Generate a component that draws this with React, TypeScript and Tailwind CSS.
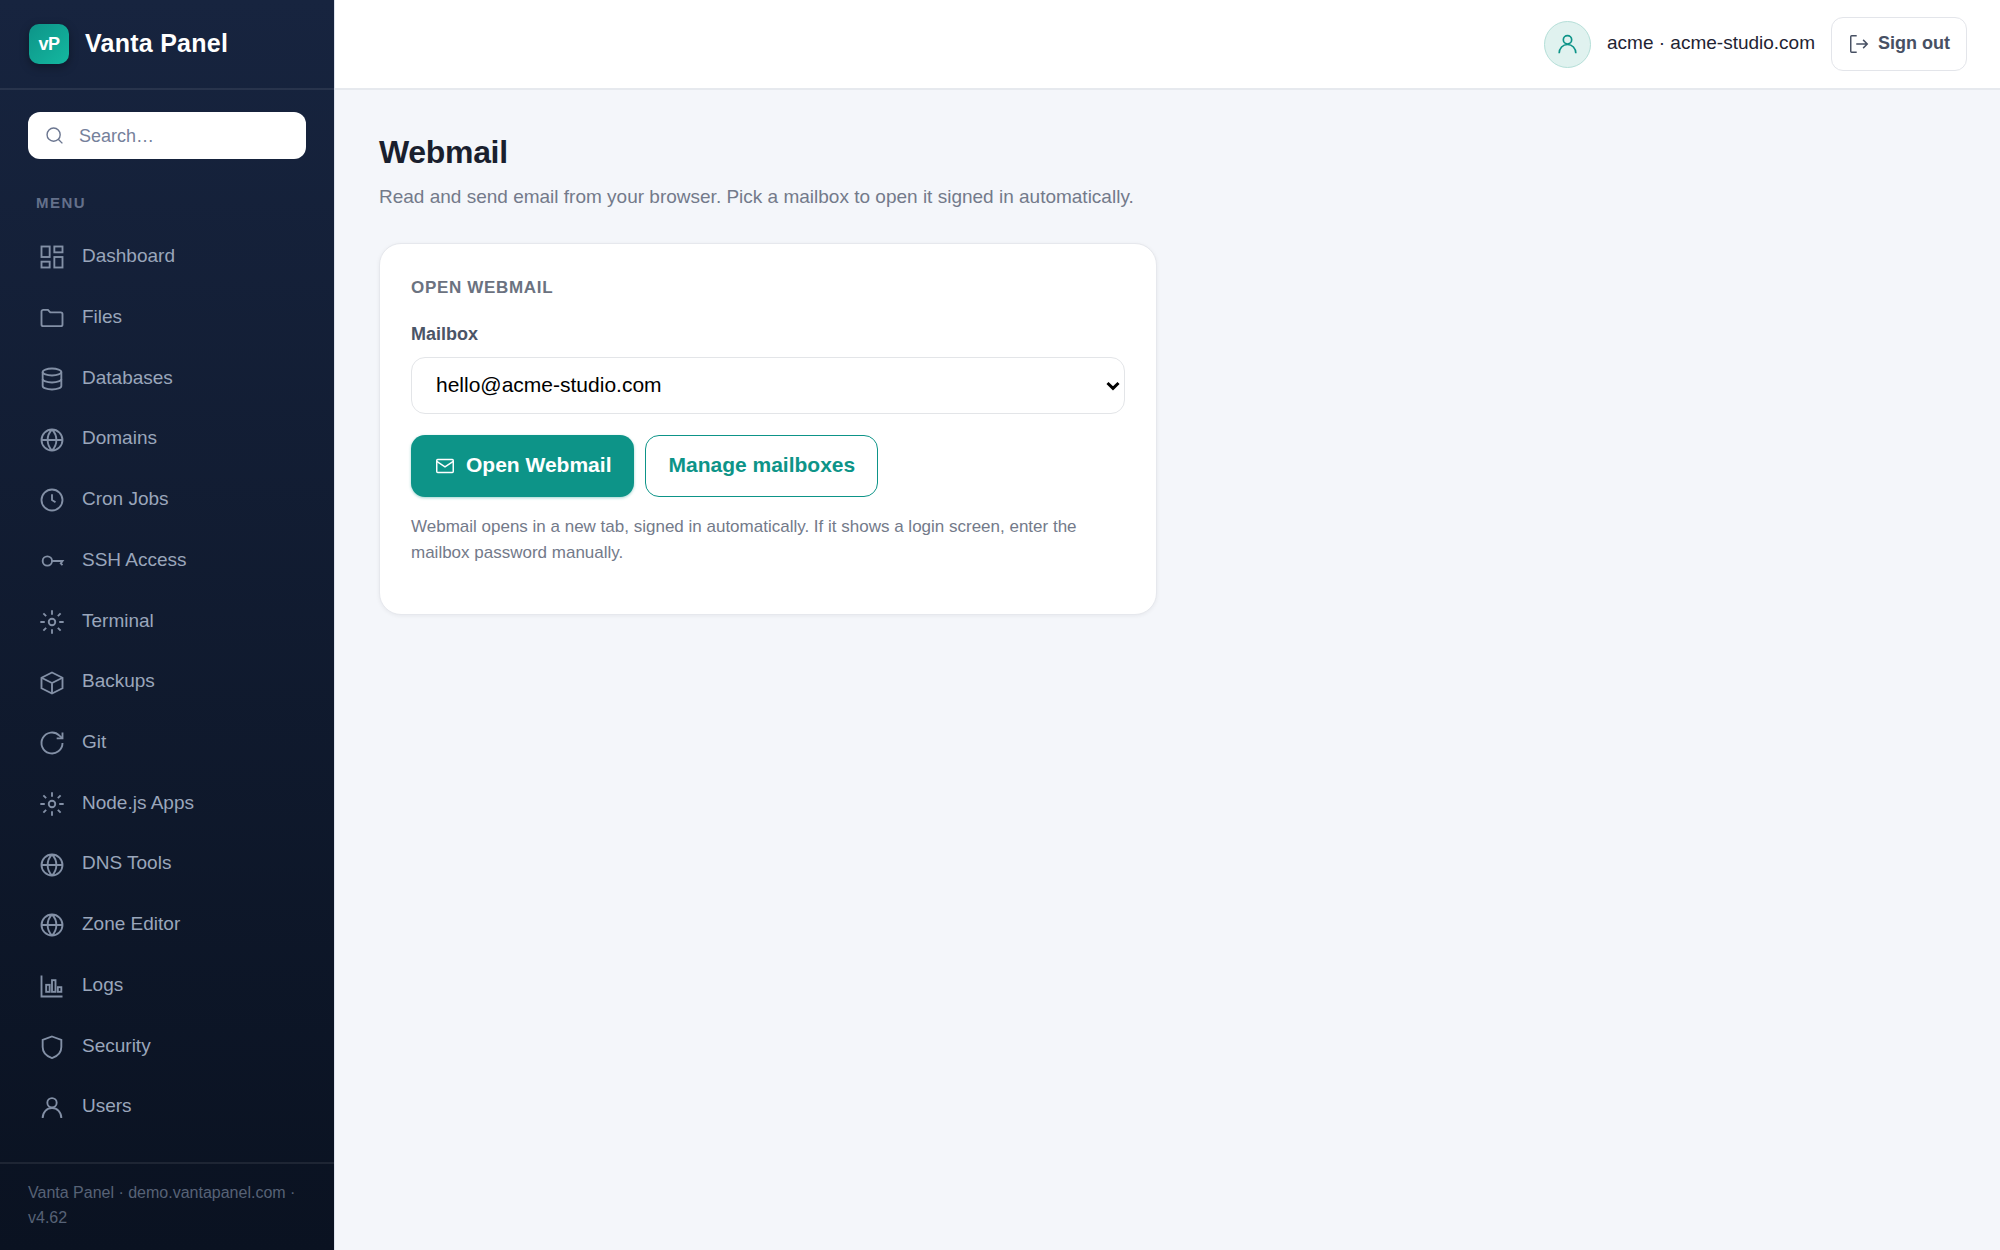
import { useState, type ReactNode } from "react";

type IconName =
  | "dashboard"
  | "folder"
  | "database"
  | "globe"
  | "clock"
  | "key"
  | "gear"
  | "box"
  | "refresh"
  | "chart"
  | "shield"
  | "user"
  | "search"
  | "logout"
  | "mail";

const shapes: Record<IconName, ReactNode> = {
  dashboard: (
    <>
      <rect x="3" y="3" width="7" height="9" />
      <rect x="14" y="3" width="7" height="5" />
      <rect x="14" y="12" width="7" height="9" />
      <rect x="3" y="16" width="7" height="5" />
    </>
  ),
  folder: (
    <path d="M3 6.500A1.500 1.500 0 0 1 4.500 5h4l2 2.200h9A1.500 1.500 0 0 1 21 8.700v8.800a1.500 1.500 0 0 1-1.500 1.500h-15A1.500 1.500 0 0 1 3 17.500z" />
  ),
  database: (
    <>
      <ellipse cx="12" cy="6" rx="8" ry="3" />
      <path d="M4 6v12c0 1.660 3.580 3 8 3s8-1.340 8-3V6" />
      <path d="M4 12c0 1.660 3.580 3 8 3s8-1.340 8-3" />
    </>
  ),
  globe: (
    <>
      <circle cx="12" cy="12" r="9" />
      <path d="M3 12h18M12 3c5 5 5 13 0 18M12 3c-5 5-5 13 0 18" />
    </>
  ),
  clock: (
    <>
      <circle cx="12" cy="12" r="9" />
      <path d="M12 7v5l3 2" />
    </>
  ),
  key: (
    <>
      <circle cx="8" cy="12" r="4" />
      <path d="M12 12h9l-1.500 2 1.500 1.500" />
    </>
  ),
  gear: (
    <>
      <circle cx="12" cy="12" r="2.800" />
      <path d="M12 2v3.800M12 18.200V22M2 12h3.800M18.200 12H22M4.600 4.600L7 7M17 17l2.400 2.400M4.600 19.400L7 17M17 7l2.400-2.400" />
    </>
  ),
  box: (
    <>
      <path d="M12 3l9 4.500v9L12 21l-9-4.500v-9z" />
      <path d="M3 7.500l9 4.500 9-4.500M12 12v9" />
    </>
  ),
  refresh: (
    <>
      <path d="M21 12a9 9 0 1 1-2.640-6.360L21 8" />
      <path d="M21 3v5h-5" />
    </>
  ),
  chart: (
    <>
      <path d="M3 3v18h18" />
      <rect x="7" y="11" width="3" height="6" />
      <rect x="12" y="7" width="3" height="10" />
      <rect x="17" y="13" width="3" height="4" />
    </>
  ),
  shield: <path d="M12 3l8 3v6c0 5-3.500 8-8 9.500C7.500 20 4 17 4 12V6z" />,
  user: (
    <>
      <circle cx="12" cy="7.500" r="4" />
      <path d="M4 20.500c0-5 3.500-8.500 8-8.500s8 3.500 8 8.500" />
    </>
  ),
  search: (
    <>
      <circle cx="11" cy="11" r="7.500" />
      <path d="M21 21l-4.700-4.700" />
    </>
  ),
  logout: (
    <>
      <path d="M9.500 3H4a1 1 0 0 0-1 1v16a1 1 0 0 0 1 1h5.500" />
      <path d="M16.500 16.500L21 12l-4.500-4.500M21 12H9" />
    </>
  ),
  mail: (
    <>
      <rect x="3" y="5" width="18" height="14" rx="1" />
      <path d="M3 7l9 6 9-6" />
    </>
  ),
};

function Icon({ name, className }: { name: IconName; className: string }) {
  return (
    <svg
      viewBox="0 0 24 24"
      fill="none"
      stroke="currentColor"
      strokeWidth="1.6"
      aria-hidden="true"
      className={className}
    >
      {shapes[name]}
    </svg>
  );
}

const menu: { label: string; icon: IconName }[] = [
  { label: "Dashboard", icon: "dashboard" },
  { label: "Files", icon: "folder" },
  { label: "Databases", icon: "database" },
  { label: "Domains", icon: "globe" },
  { label: "Cron Jobs", icon: "clock" },
  { label: "SSH Access", icon: "key" },
  { label: "Terminal", icon: "gear" },
  { label: "Backups", icon: "box" },
  { label: "Git", icon: "refresh" },
  { label: "Node.js Apps", icon: "gear" },
  { label: "DNS Tools", icon: "globe" },
  { label: "Zone Editor", icon: "globe" },
  { label: "Logs", icon: "chart" },
  { label: "Security", icon: "shield" },
  { label: "Users", icon: "user" },
];

function Sidebar() {
  return (
    <aside className="flex w-[335px] shrink-0 flex-col border-r border-[#dde2ec] bg-linear-to-b from-[#17243f] to-[#0a1221]">
      <div className="flex h-[90px] items-center gap-4 border-b-2 border-white/8 px-[29px]">
        <div className="flex size-10 items-center justify-center rounded-[10px] bg-linear-to-br from-[#0d9488] to-[#14b8a0] text-[18px] font-bold tracking-tight text-white shadow-[0_3px_10px_rgba(0,0,0,0.35)]">
          vP
        </div>
        <span className="text-[25px] font-bold tracking-[0.01em] text-white">Vanta Panel</span>
      </div>

      <div className="mx-7 mt-[22px] flex h-[47px] items-center gap-[14px] rounded-xl bg-white pl-4">
        <Icon name="search" className="size-[21px] shrink-0 text-[#6b7690]" />
        <input
          type="search"
          aria-label="Search"
          placeholder="Search…"
          className="w-full min-w-0 bg-transparent pt-0.5 pr-4 text-[18px] text-slate-800 outline-none placeholder:text-[#75819b]"
        />
      </div>

      <h2 className="mt-8 px-9 text-[15px] leading-6 font-bold tracking-widest text-[#64708a]">MENU</h2>

      <nav aria-label="Main" className="mt-3 mb-6 flex grow flex-col">
        {menu.map((item) => (
          <a
            key={item.label}
            href="#"
            className="flex grow basis-10 items-center gap-4 px-[38px] text-[19px] text-[#9aa6bb] hover:text-white"
          >
            <Icon name={item.icon} className="size-7 text-[#8390a6]" />
            <span className="pb-0.5">{item.label}</span>
          </a>
        ))}
      </nav>

      <footer className="border-t-2 border-white/8 px-7 pt-4 pb-5 text-[16px] leading-[25px] text-[#576276]">
        Vanta Panel · demo.vantapanel.com · v4.62
      </footer>
    </aside>
  );
}

function TopBar() {
  return (
    <header className="flex h-[90px] items-center justify-end gap-4 border-b-2 border-[#e6e9ee] bg-white px-[33px]">
      <div className="flex size-[47px] items-center justify-center rounded-full border border-[#b5dfd8] bg-[#e0f2ef] text-[#0d9488]">
        <Icon name="user" className="size-[25px]" />
      </div>
      <span className="pb-0.5 text-[19px] text-[#1f2433]">acme · acme-studio.com</span>
      <button
        type="button"
        className="flex h-[54px] items-center gap-2 rounded-xl border border-[#e3e5ea] bg-white px-4 text-[18px] font-bold text-[#475063]"
      >
        <Icon name="logout" className="size-[22px]" />
        <span className="pb-0.5">Sign out</span>
      </button>
    </header>
  );
}

function WebmailCard() {
  const [mailbox, setMailbox] = useState("hello@acme-studio.com");
  return (
    <section className="mt-8 max-w-[778px] rounded-[22px] border border-[#e6e8ed] bg-white px-[31px] pt-8 pb-12 shadow-[0_1px_4px_rgba(16,24,40,0.06)]">
      <h2 className="text-[17px] leading-6 font-bold tracking-[0.04em] text-[#6b7280]">OPEN WEBMAIL</h2>
      <label htmlFor="mailbox" className="mt-[22px] block text-[18px] leading-6 font-bold text-[#4b5567]">
        Mailbox
      </label>
      <div className="relative mt-[11px]">
        <select
          id="mailbox"
          value={mailbox}
          onChange={(e) => setMailbox(e.target.value)}
          className="h-[57px] w-full appearance-none rounded-[14px] border border-[#e3e5e8] bg-white px-6 pb-0.5 text-[21px] text-black"
        >
          <option>hello@acme-studio.com</option>
        </select>
        <svg
          viewBox="0 0 14 14"
          fill="none"
          stroke="black"
          strokeWidth="3"
          aria-hidden="true"
          className="pointer-events-none absolute inset-y-0 right-[5px] my-auto size-[14px]"
        >
          <path d="M1.500 4L7 9.300 12.500 4" />
        </svg>
      </div>
      <div className="mt-[21px] flex flex-wrap gap-[11px]">
        <button
          type="button"
          className="flex h-[62px] items-center gap-[10px] rounded-[14px] bg-[#0d9488] px-[23px] text-[21px] font-bold text-white shadow-[0_1px_3px_rgba(13,148,136,0.4)]"
        >
          <Icon name="mail" className="size-[22px]" />
          <span className="pb-0.5">Open Webmail</span>
        </button>
        <button
          type="button"
          className="h-[62px] rounded-[14px] border border-[#0d9488] bg-white px-[22px] pb-0.5 text-[21px] font-bold text-[#0d9488]"
        >
          Manage mailboxes
        </button>
      </div>
      <p className="mt-[17px] text-[17px] leading-[26px] text-[#737a8a]">
        Webmail opens in a new tab, signed in automatically. If it shows a login screen, enter the mailbox password
        manually.
      </p>
    </section>
  );
}

export default function App() {
  return (
    <div className="flex min-h-screen bg-[#f4f6fa] font-['Liberation_Sans',Arial,sans-serif]">
      <Sidebar />
      <div className="min-w-0 grow">
        <TopBar />
        <main className="px-11 pt-10">
          <h1 className="text-[32px] leading-[44px] font-bold tracking-[-0.01em] text-[#1a1f2e]">Webmail</h1>
          <p className="mt-[9px] text-[19px] leading-7 text-[#737a8a]">
            Read and send email from your browser. Pick a mailbox to open it signed in automatically.
          </p>
          <WebmailCard />
        </main>
      </div>
    </div>
  );
}
